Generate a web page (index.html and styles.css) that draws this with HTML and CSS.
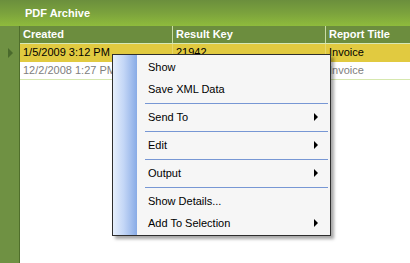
FILE: index.html
```html
<!DOCTYPE html>
<html>
<head>
<meta charset="utf-8">
<link rel="stylesheet" href="styles.css">
</head>
<body>
<div class="app">
  <div class="titlebar">PDF Archive</div>
  <div class="main">
    <div class="rowheads">
      <div class="rh-head"></div>
      <div class="rh-row"><span class="current"></span></div>
      <div class="rh-row"></div>
    </div>
    <div class="grid">
      <div class="row head">
        <div class="cell c1">Created</div>
        <div class="cell c2">Result Key</div>
        <div class="cell c3">Report Title</div>
      </div>
      <div class="row sel">
        <div class="cell c1">1/5/2009 3:12 PM</div>
        <div class="cell c2">21942</div>
        <div class="cell c3">Invoice</div>
      </div>
      <div class="row plain">
        <div class="cell c1">12/2/2008 1:27 PM</div>
        <div class="cell c2">21943</div>
        <div class="cell c3">Invoice</div>
      </div>
    </div>
  </div>
  <div class="menu">
    <div class="band"></div>
    <ul class="items">
      <li class="item">Show</li>
      <li class="item">Save XML Data</li>
      <li class="sep"></li>
      <li class="item sub">Send To</li>
      <li class="sep"></li>
      <li class="item sub">Edit</li>
      <li class="sep"></li>
      <li class="item sub">Output</li>
      <li class="sep"></li>
      <li class="item">Show Details...</li>
      <li class="item sub">Add To Selection</li>
    </ul>
  </div>
</div>
</body>
</html>
```
FILE: styles.css
```css
* { box-sizing: border-box; }
html, body { margin: 0; padding: 0; }
body {
  width: 410px;
  height: 263px;
  overflow: hidden;
  font-family: "Liberation Sans", Arial, sans-serif;
  font-size: 11px;
  background: #ffffff;
}
.app {
  position: relative;
  display: flex;
  flex-direction: column;
  height: 263px;
}
.titlebar {
  height: 26px;
  background: linear-gradient(to bottom, #6b8f3d 0%, #7ba23d 50%, #8fbb3c 100%);
  color: #ffffff;
  font-weight: bold;
  padding-left: 25px;
  line-height: 26px;
}
.main {
  flex: 1;
  display: flex;
}
.rowheads {
  width: 20px;
  background: #6f9143;
  border-right: 1px solid #4f6e2b;
  display: flex;
  flex-direction: column;
}
.rh-head { height: 18px; }
.rh-row {
  height: 18px;
  display: flex;
  align-items: center;
  padding-left: 8px;
}
.current {
  width: 0;
  height: 0;
  border-top: 5px solid transparent;
  border-bottom: 5px solid transparent;
  border-left: 5px solid #4a6a2c;
}
.grid {
  flex: 1;
  display: flex;
  flex-direction: column;
}
.row {
  display: grid;
  grid-template-columns: 153px 153px 1fr;
  height: 18px;
}
.cell {
  padding-left: 3px;
  line-height: 17px;
  white-space: nowrap;
  overflow: hidden;
}
.head {
  background: #6c8d3e;
  color: #ffffff;
  font-weight: bold;
  border-bottom: 1px solid #d7e8b6;
}
.head .c1, .head .c2 { border-right: 1px solid #c9dca4; }
.sel {
  background: #e1ca40;
  color: #000000;
}
.sel .c1, .sel .c2 { border-right: 1px solid #e8d66a; }
.plain {
  color: #808080;
  border-bottom: 1px solid #d6e8ae;
}
.plain .c1, .plain .c2 { border-right: 1px solid #e4efcf; }

.menu {
  position: absolute;
  left: 112px;
  top: 54px;
  width: 219px;
  height: 182px;
  background: #f6f6f6;
  border: 1px solid #2e2e2e;
  box-shadow: 3px 3px 3px rgba(0, 0, 0, 0.35);
  display: flex;
}
.band {
  width: 24px;
  background: linear-gradient(to right, #e6effc 0%, #c3d6f6 45%, #88abe6 100%);
}
.items {
  list-style: none;
  margin: 0;
  padding: 1px 2px 0 8px;
  flex: 1;
  color: #000000;
}
.item {
  height: 22px;
  line-height: 22px;
  padding-left: 3px;
  position: relative;
}
.sub::after {
  content: "";
  position: absolute;
  right: 10px;
  top: 7px;
  width: 0;
  height: 0;
  border-top: 4px solid transparent;
  border-bottom: 4px solid transparent;
  border-left: 4px solid #000000;
}
.sep {
  height: 6px;
  display: flex;
  align-items: center;
}
.sep::before {
  content: "";
  flex: 1;
  height: 1px;
  background: #7797d4;
}
```
